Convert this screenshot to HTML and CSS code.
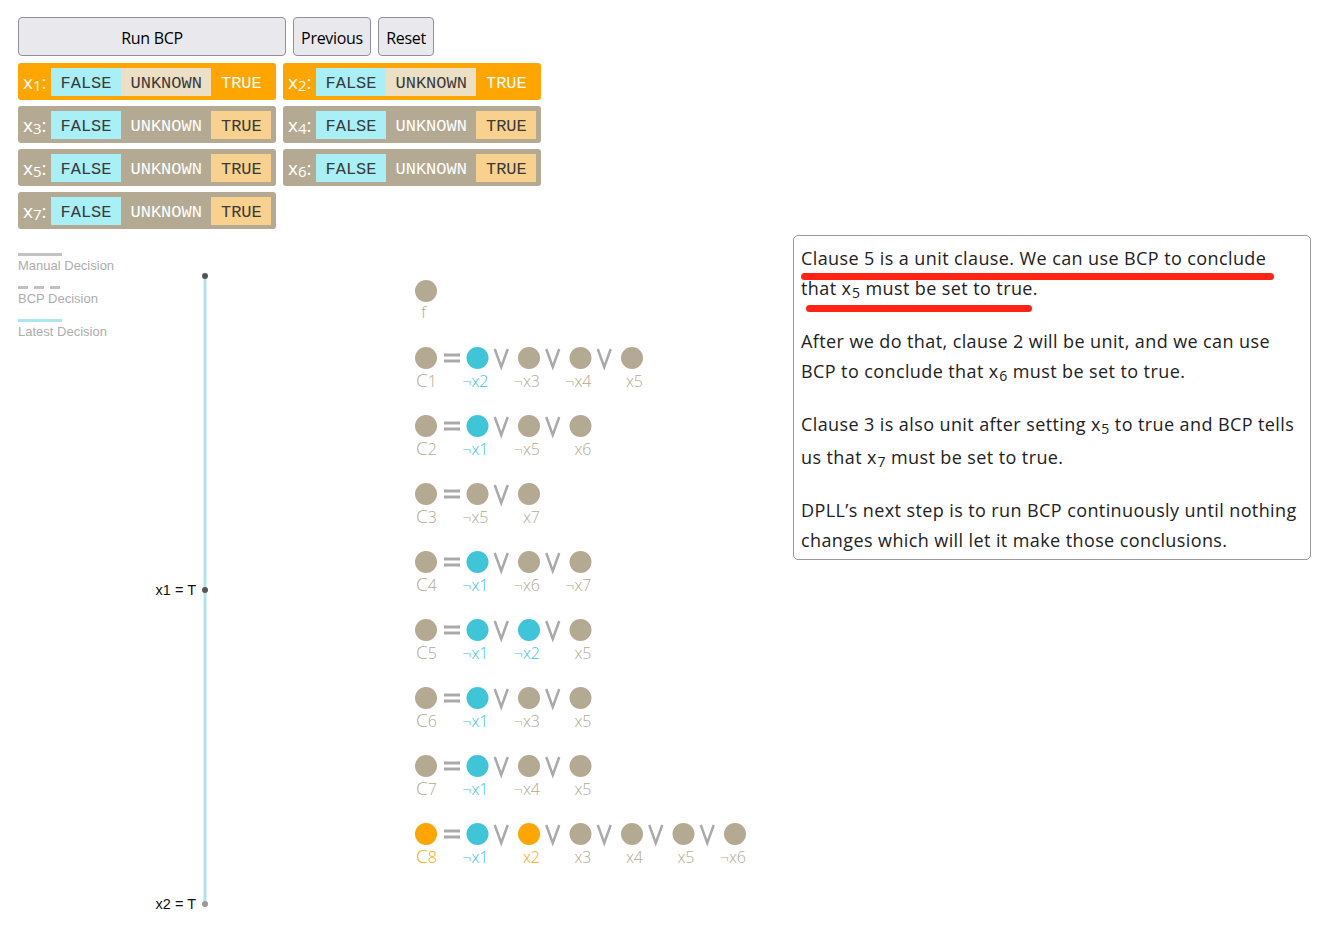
FILE: index.html
```html
<!DOCTYPE html>
<html>
<head>
<meta charset="utf-8">
<title>DPLL BCP</title>
<link rel="stylesheet" href="styles.css">
</head>
<body>
<div class="app">
  <div class="controls">
    <button class="btn btn-wide">Run BCP</button>
    <button class="btn btn-prev">Previous</button>
    <button class="btn btn-reset">Reset</button>
  </div>
  <div class="vars">
    <div class="var on"><span class="vl">x<sub>1</sub>:</span><span class="cell f">FALSE</span><span class="cell u">UNKNOWN</span><span class="cell t sel">TRUE</span></div>
    <div class="var on"><span class="vl">x<sub>2</sub>:</span><span class="cell f">FALSE</span><span class="cell u">UNKNOWN</span><span class="cell t sel">TRUE</span></div>
    <div class="var"><span class="vl">x<sub>3</sub>:</span><span class="cell f">FALSE</span><span class="cell u sel">UNKNOWN</span><span class="cell t">TRUE</span></div>
    <div class="var"><span class="vl">x<sub>4</sub>:</span><span class="cell f">FALSE</span><span class="cell u sel">UNKNOWN</span><span class="cell t">TRUE</span></div>
    <div class="var"><span class="vl">x<sub>5</sub>:</span><span class="cell f">FALSE</span><span class="cell u sel">UNKNOWN</span><span class="cell t">TRUE</span></div>
    <div class="var"><span class="vl">x<sub>6</sub>:</span><span class="cell f">FALSE</span><span class="cell u sel">UNKNOWN</span><span class="cell t">TRUE</span></div>
    <div class="var"><span class="vl">x<sub>7</sub>:</span><span class="cell f">FALSE</span><span class="cell u sel">UNKNOWN</span><span class="cell t">TRUE</span></div>
  </div>
  <div class="main">
    <svg class="viz" width="775" height="690" viewBox="0 0 775 690">
      <defs>
        <path id="or" class="or" d="M-6.5 -9 L0 9 L6.5 -9"/>
        <g id="eq"><line class="eqbar" x1="426" y1="-3" x2="442" y2="-3"/><line class="eqbar" x1="426" y1="3" x2="442" y2="3"/></g>
      </defs>
      <!-- legend -->
      <line class="lg-solid" x1="0" y1="19.5" x2="44" y2="19.5"/>
      <text class="lg-text" x="0" y="35">Manual Decision</text>
      <line class="lg-dash" x1="0" y1="52.5" x2="44" y2="52.5"/>
      <text class="lg-text" x="0" y="68">BCP Decision</text>
      <line class="lg-latest" x1="0" y1="85.5" x2="44" y2="85.5"/>
      <text class="lg-text" x="0" y="101">Latest Decision</text>
      <!-- tree -->
      <line class="tree" x1="187" y1="41" x2="187" y2="669"/>
      <circle class="node" cx="187" cy="41" r="3"/>
      <circle class="node" cx="187" cy="355" r="3"/>
      <circle class="node leaf" cx="187" cy="669" r="3"/>
      <text class="tlabel" x="178" y="360">x1 = T</text>
      <text class="tlabel" x="178" y="674">x2 = T</text>
      <!-- formula -->
      <circle class="c-tan" cx="408" cy="56" r="11"/>
      <text class="lit tan" x="408" y="83" text-anchor="middle">f</text>

      <g transform="translate(0,123)">
        <circle class="c-tan" cx="408" r="11"/><use href="#eq"/>
        <circle class="c-cyan" cx="459.5" r="11"/><use href="#or" x="483.25"/>
        <circle class="c-tan" cx="511" r="11"/><use href="#or" x="534.75"/>
        <circle class="c-tan" cx="562.5" r="11"/><use href="#or" x="586.25"/>
        <circle class="c-tan" cx="614" r="11"/>
        <text class="lit tan" x="419" y="29"><tspan class="cl">C</tspan>1</text>
        <text class="lit cyan" x="470.5" y="29">¬x2</text>
        <text class="lit tan" x="522" y="29">¬x3</text>
        <text class="lit tan" x="573.5" y="29">¬x4</text>
        <text class="lit tan" x="625" y="29">x5</text>
      </g>

      <g transform="translate(0,191)">
        <circle class="c-tan" cx="408" r="11"/><use href="#eq"/>
        <circle class="c-cyan" cx="459.5" r="11"/><use href="#or" x="483.25"/>
        <circle class="c-tan" cx="511" r="11"/><use href="#or" x="534.75"/>
        <circle class="c-tan" cx="562.5" r="11"/>
        <text class="lit tan" x="419" y="29"><tspan class="cl">C</tspan>2</text>
        <text class="lit cyan" x="470.5" y="29">¬x1</text>
        <text class="lit tan" x="522" y="29">¬x5</text>
        <text class="lit tan" x="573.5" y="29">x6</text>
      </g>

      <g transform="translate(0,259)">
        <circle class="c-tan" cx="408" r="11"/><use href="#eq"/>
        <circle class="c-tan" cx="459.5" r="11"/><use href="#or" x="483.25"/>
        <circle class="c-tan" cx="511" r="11"/>
        <text class="lit tan" x="419" y="29"><tspan class="cl">C</tspan>3</text>
        <text class="lit tan" x="470.5" y="29">¬x5</text>
        <text class="lit tan" x="522" y="29">x7</text>
      </g>

      <g transform="translate(0,327)">
        <circle class="c-tan" cx="408" r="11"/><use href="#eq"/>
        <circle class="c-cyan" cx="459.5" r="11"/><use href="#or" x="483.25"/>
        <circle class="c-tan" cx="511" r="11"/><use href="#or" x="534.75"/>
        <circle class="c-tan" cx="562.5" r="11"/>
        <text class="lit tan" x="419" y="29"><tspan class="cl">C</tspan>4</text>
        <text class="lit cyan" x="470.5" y="29">¬x1</text>
        <text class="lit tan" x="522" y="29">¬x6</text>
        <text class="lit tan" x="573.5" y="29">¬x7</text>
      </g>

      <g transform="translate(0,395)">
        <circle class="c-tan" cx="408" r="11"/><use href="#eq"/>
        <circle class="c-cyan" cx="459.5" r="11"/><use href="#or" x="483.25"/>
        <circle class="c-cyan" cx="511" r="11"/><use href="#or" x="534.75"/>
        <circle class="c-tan" cx="562.5" r="11"/>
        <text class="lit tan" x="419" y="29"><tspan class="cl">C</tspan>5</text>
        <text class="lit cyan" x="470.5" y="29">¬x1</text>
        <text class="lit cyan" x="522" y="29">¬x2</text>
        <text class="lit tan" x="573.5" y="29">x5</text>
      </g>

      <g transform="translate(0,463)">
        <circle class="c-tan" cx="408" r="11"/><use href="#eq"/>
        <circle class="c-cyan" cx="459.5" r="11"/><use href="#or" x="483.25"/>
        <circle class="c-tan" cx="511" r="11"/><use href="#or" x="534.75"/>
        <circle class="c-tan" cx="562.5" r="11"/>
        <text class="lit tan" x="419" y="29"><tspan class="cl">C</tspan>6</text>
        <text class="lit cyan" x="470.5" y="29">¬x1</text>
        <text class="lit tan" x="522" y="29">¬x3</text>
        <text class="lit tan" x="573.5" y="29">x5</text>
      </g>

      <g transform="translate(0,531)">
        <circle class="c-tan" cx="408" r="11"/><use href="#eq"/>
        <circle class="c-cyan" cx="459.5" r="11"/><use href="#or" x="483.25"/>
        <circle class="c-tan" cx="511" r="11"/><use href="#or" x="534.75"/>
        <circle class="c-tan" cx="562.5" r="11"/>
        <text class="lit tan" x="419" y="29"><tspan class="cl">C</tspan>7</text>
        <text class="lit cyan" x="470.5" y="29">¬x1</text>
        <text class="lit tan" x="522" y="29">¬x4</text>
        <text class="lit tan" x="573.5" y="29">x5</text>
      </g>

      <g transform="translate(0,599)">
        <circle class="c-orange" cx="408" r="11"/><use href="#eq"/>
        <circle class="c-cyan" cx="459.5" r="11"/><use href="#or" x="483.25"/>
        <circle class="c-orange" cx="511" r="11"/><use href="#or" x="534.75"/>
        <circle class="c-tan" cx="562.5" r="11"/><use href="#or" x="586.25"/>
        <circle class="c-tan" cx="614" r="11"/><use href="#or" x="637.75"/>
        <circle class="c-tan" cx="665.5" r="11"/><use href="#or" x="689.25"/>
        <circle class="c-tan" cx="717" r="11"/>
        <text class="lit orange" x="419" y="29"><tspan class="cl">C</tspan>8</text>
        <text class="lit cyan" x="470.5" y="29">¬x1</text>
        <text class="lit orange" x="522" y="29">x2</text>
        <text class="lit tan" x="573.5" y="29">x3</text>
        <text class="lit tan" x="625" y="29">x4</text>
        <text class="lit tan" x="676.5" y="29">x5</text>
        <text class="lit tan" x="728" y="29">¬x6</text>
      </g>
    </svg>
    <div class="note">
      <p><span class="ln">Clause 5 is a unit clause. We can use BCP to conclude</span> <span class="ln">that x<sub>5</sub> must be set to true.</span></p>
      <p><span class="ln">After we do that, clause 2 will be unit, and we can use</span> <span class="ln">BCP to conclude that x<sub>6</sub> must be set to true.</span></p>
      <p><span class="ln">Clause 3 is also unit after setting x<sub>5</sub> to true and BCP tells</span> <span class="ln tall">us that x<sub>7</sub> must be set to true.</span></p>
      <p><span class="ln">DPLL’s next step is to run BCP continuously until nothing</span> <span class="ln">changes which will let it make those conclusions.</span></p>
      <span class="mark mark-1"></span>
      <span class="mark mark-2"></span>
    </div>
  </div>
</div>
</body>
</html>
```

FILE: styles.css
```css
body {
  margin: 0;
  font-family: "Open Sans", "Noto Sans", sans-serif;
  background: #fff;
}

.app {
  padding: 17px 18px 0;
}

.controls {
  display: flex;
  gap: 7px;
}

.btn {
  height: 39px;
  box-sizing: border-box;
  font-family: "Open Sans", sans-serif;
  font-size: 16px;
  letter-spacing: -0.3px;
  color: #000;
  background: #e9e9ed;
  border: 1px solid #8f8f9d;
  border-radius: 4px;
  padding: 2px 0 0;
}

.btn-wide { width: 268px; }
.btn-prev { width: 78px; }
.btn-reset { width: 56px; }

.vars {
  display: grid;
  grid-template-columns: 258px 258px;
  column-gap: 7px;
  row-gap: 6px;
  margin-top: 7px;
}

.var {
  display: flex;
  align-items: center;
  height: 37px;
  box-sizing: border-box;
  padding: 1px 4px 0 5px;
  border-radius: 3px;
  background: #b4aa93;
}

.var.on {
  background: #ffa500;
}

.vl {
  width: 28px;
  flex: none;
  color: #fff;
  font-size: 19px;
  line-height: 28px;
}

.vl sub {
  font-size: 15px;
  vertical-align: -2px;
  line-height: 0;
}

.cell {
  height: 28px;
  line-height: 31px;
  padding: 0 9.5px;
  font-family: "Liberation Mono", monospace;
  font-size: 17px;
  color: #3a3a3a;
}

.cell.f { background: #a9eff6; }
.cell.u { background: #ebdfc6; }
.cell.t { background: #f9d18e; }
.cell.sel { background: transparent; color: #fff; }

.main {
  display: flex;
  align-items: flex-start;
  margin-top: 6px;
}

.viz {
  flex: none;
  display: block;
}

.lg-solid { stroke: #c2c2c2; stroke-width: 3; }
.lg-dash { stroke: #c2c2c2; stroke-width: 3; stroke-dasharray: 10 6; }
.lg-latest { stroke: #aee6ed; stroke-width: 3; }
.lg-text {
  font-family: "Liberation Sans", Arial, sans-serif;
  font-size: 13px;
  fill: #adadad;
}

.tree { stroke: #aee5ec; stroke-width: 3; }
.node { fill: #555; }
.node.leaf { fill: #999; }
.tlabel {
  font-family: "Liberation Sans", Arial, sans-serif;
  font-size: 14.5px;
  fill: #111;
  text-anchor: end;
}

.c-tan { fill: #b4aa93; }
.c-cyan { fill: #40c4d7; }
.c-orange { fill: #ffa500; }

.or {
  fill: none;
  stroke: #aaa;
  stroke-width: 2.5;
}

.eqbar {
  stroke: #aaa;
  stroke-width: 3;
}

.lit {
  font-family: "Open Sans", sans-serif;
  font-weight: 300;
  font-size: 16px;
  text-anchor: end;
}

.lit .cl { font-size: 19px; }

.lit.tan { fill: #b4aa93; }
.lit.cyan { fill: #40c4d7; }
.lit.orange { fill: #ffa500; }

.note {
  position: relative;
  width: 518px;
  box-sizing: border-box;
  border: 1px solid #999;
  border-radius: 5px;
  padding: 7px 7px 4px;
  font-family: "Open Sans", sans-serif;
  font-size: 18px;
  letter-spacing: 0.4px;
  line-height: 30px;
  color: #222;
}

.note p {
  margin: 0 0 23px;
}

.note p:last-of-type {
  margin-bottom: 0;
}

.ln {
  display: block;
  white-space: nowrap;
}

.ln.tall {
  padding-top: 3px;
}

.note sub {
  font-size: 14px;
  vertical-align: -3px;
  line-height: 0;
  letter-spacing: 0;
  margin: 0 0.5px;
}

.mark {
  position: absolute;
  height: 7px;
  background: #ff2314;
  border-radius: 4px;
}

.mark-1 {
  left: 7px;
  top: 37px;
  width: 473px;
}

.mark-2 {
  left: 12px;
  top: 69px;
  width: 226px;
}
```
